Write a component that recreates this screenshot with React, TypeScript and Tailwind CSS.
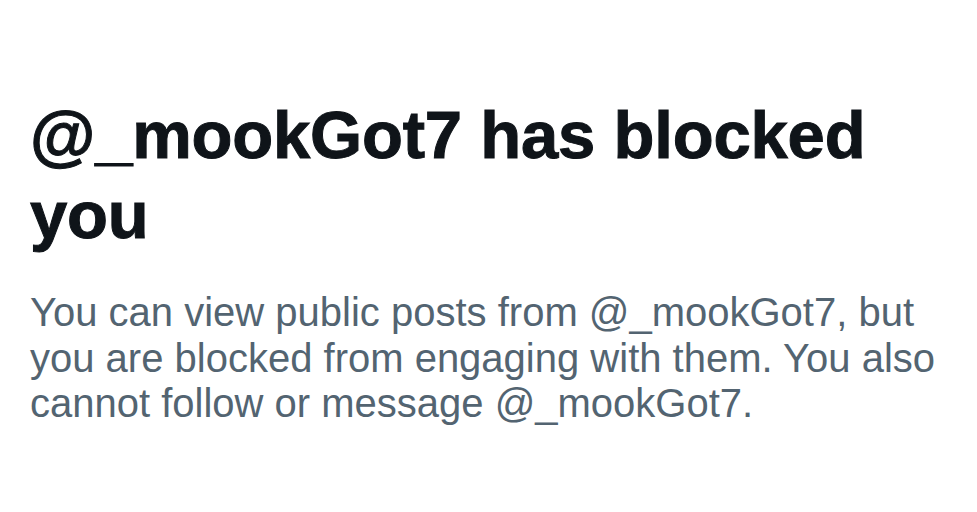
export default function App() {
  return (
    <div className="min-h-screen w-full bg-white">
      <div className="pl-[30px] pr-[26px] pt-[95px] font-['Liberation_Sans',Arial,sans-serif]">
        <h1 className="text-[67px] font-bold leading-[80px] tracking-[-0.2px] text-[#0f1419] [-webkit-text-stroke:1px_#0f1419]">
          @_mookGot7 has blocked you
        </h1>
        <p className="mt-[35px] text-[40px] leading-[45.5px] text-[#536471]">
          You can view public posts from @_mookGot7, but you are blocked from
          engaging with them. You also cannot follow or message @_mookGot7.
        </p>
      </div>
    </div>
  );
}
